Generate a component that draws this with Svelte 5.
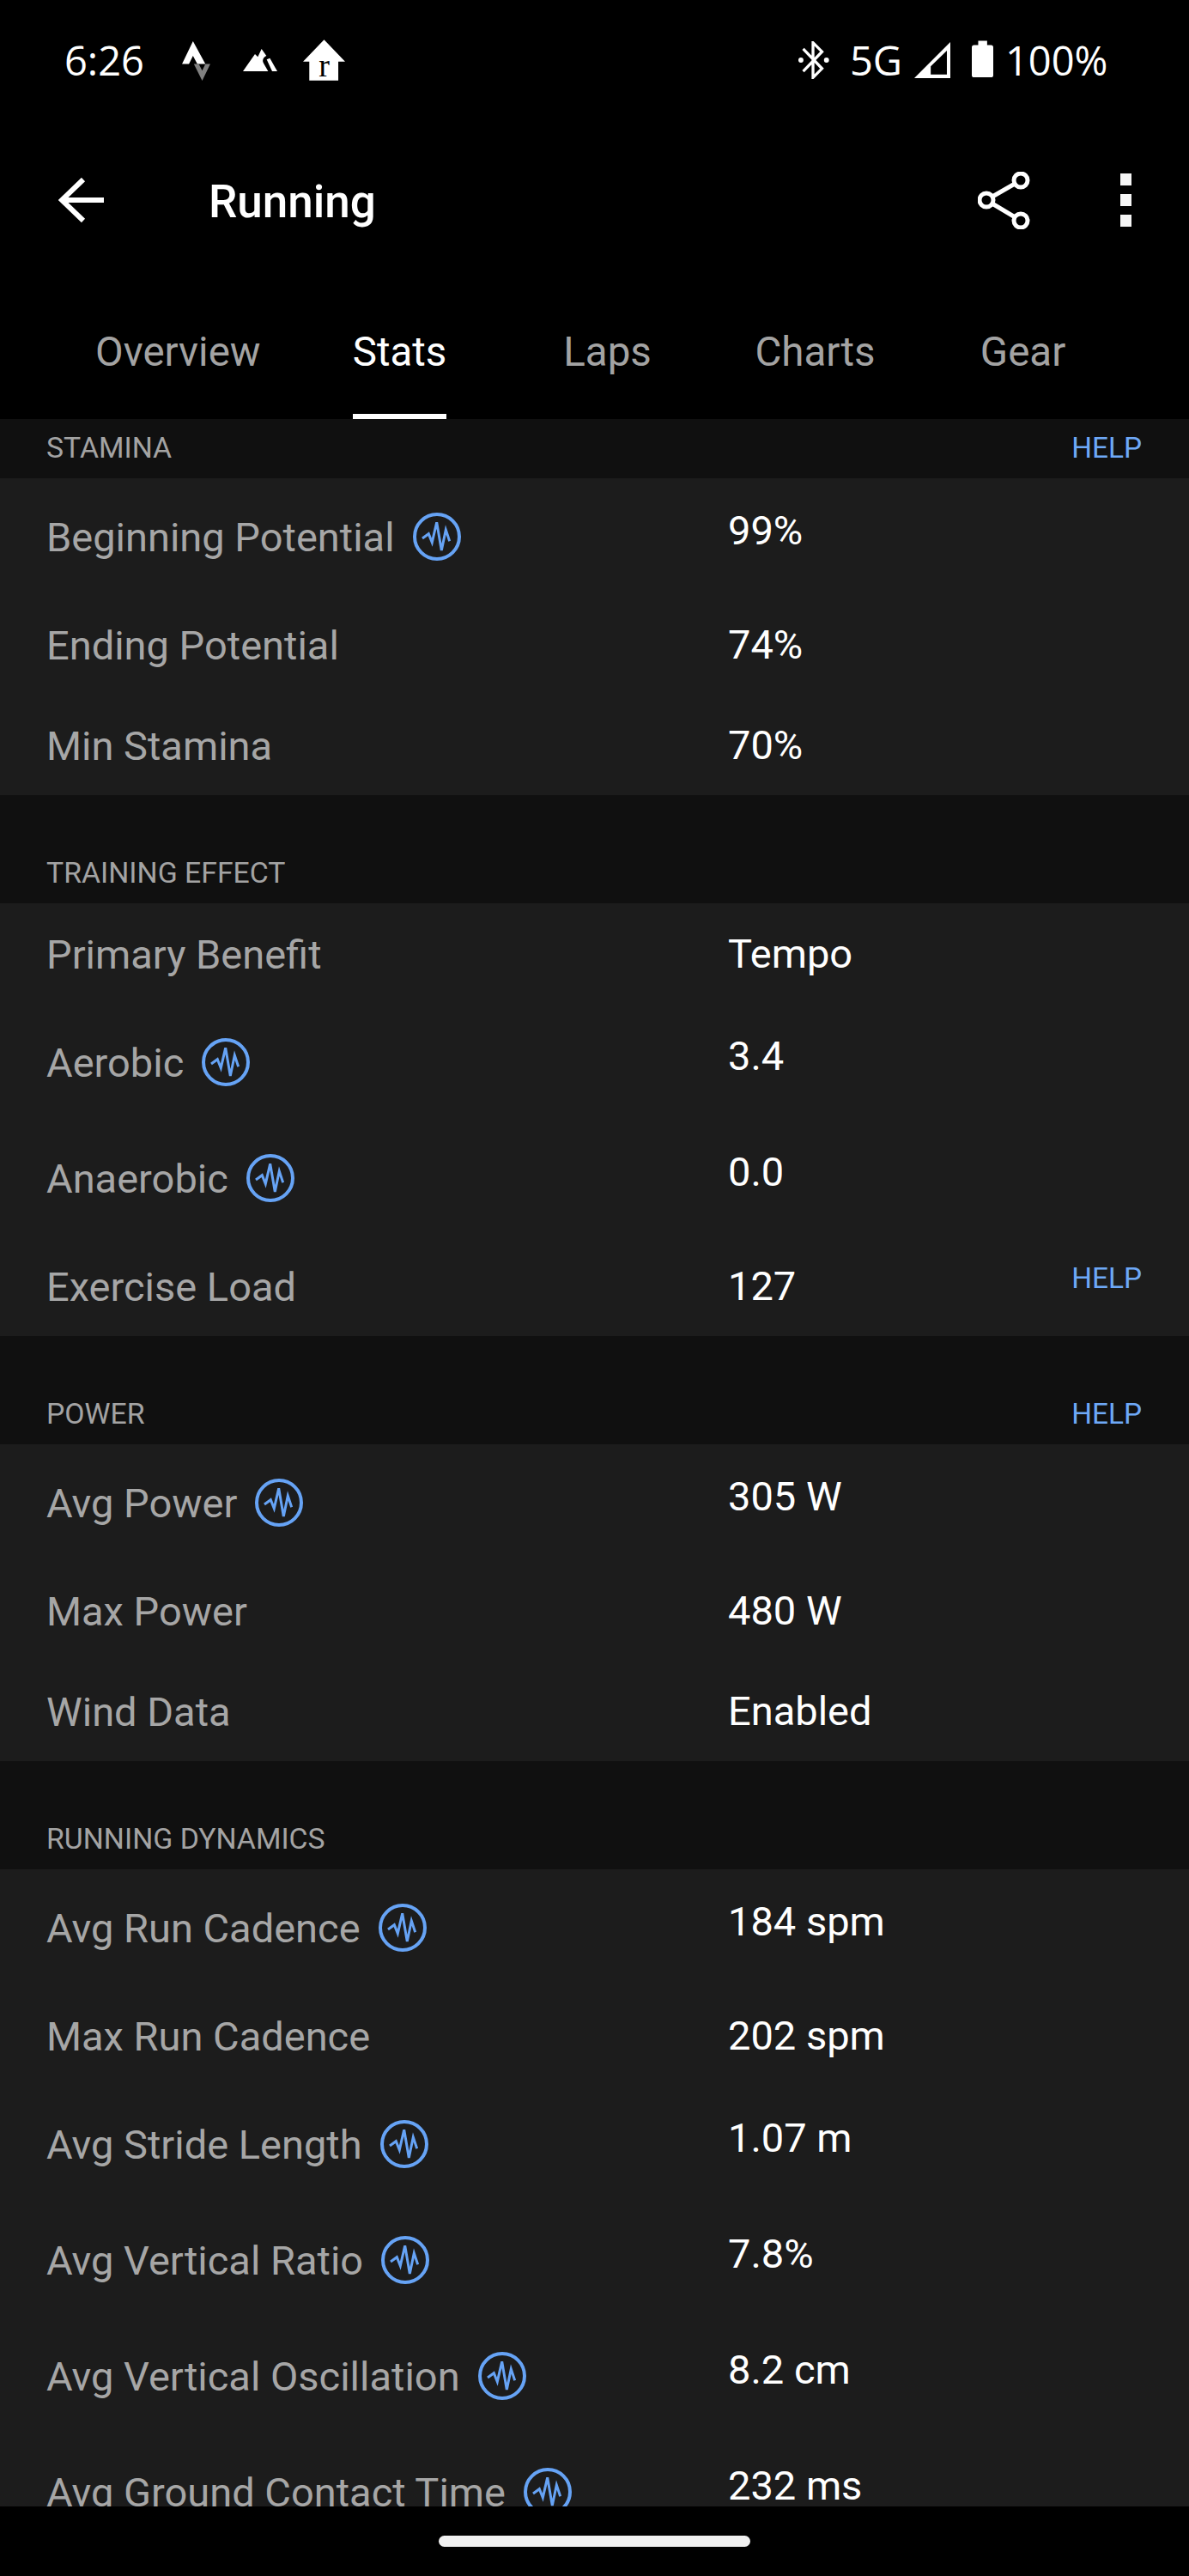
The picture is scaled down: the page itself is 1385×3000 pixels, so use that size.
<script>
    const tabs = ['Overview', 'Stats', 'Laps', 'Charts', 'Gear'];
    const sections = [
        {
            title: 'STAMINA', help: true, clipped: true,
            rows: [
                {label: 'Beginning Potential', value: '99%', chart: true},
                {label: 'Ending Potential', value: '74%'},
                {label: 'Min Stamina', value: '70%'}
            ]
        },
        {
            title: 'TRAINING EFFECT',
            rows: [
                {label: 'Primary Benefit', value: 'Tempo'},
                {label: 'Aerobic', value: '3.4', chart: true},
                {label: 'Anaerobic', value: '0.0', chart: true},
                {label: 'Exercise Load', value: '127', help: true}
            ]
        },
        {
            title: 'POWER', help: true,
            rows: [
                {label: 'Avg Power', value: '305 W', chart: true},
                {label: 'Max Power', value: '480 W'},
                {label: 'Wind Data', value: 'Enabled'}
            ]
        },
        {
            title: 'RUNNING DYNAMICS',
            rows: [
                {label: 'Avg Run Cadence', value: '184 spm', chart: true},
                {label: 'Max Run Cadence', value: '202 spm'},
                {label: 'Avg Stride Length', value: '1.07 m', chart: true},
                {label: 'Avg Vertical Ratio', value: '7.8%', chart: true},
                {label: 'Avg Vertical Oscillation', value: '8.2 cm', chart: true},
                {label: 'Avg Ground Contact Time', value: '232 ms', chart: true}
            ]
        }
    ];
</script>

<div class="screen">
    <div class="status">
        <div class="status-left">
            <span class="time">6:26</span>
            <svg class="strava" viewBox="517 83 98 137">
                <path fill="#fff" d="M555 83 517 162H541L555 134 570 162H598Z"/>
                <path fill="#808080" d="M558 162 587 220 615 162H598L587 185 575 162Z"/>
            </svg>
            <svg class="peaks" viewBox="730 108 120 82">
                <path fill="#fff" d="M730 188 772 128 782 138 795 110 812 134C800 140 796 150 803 162L818 188Z"/>
                <path fill="#fff" d="M813 147 824 142 850 188H832Z"/>
            </svg>
            <svg class="house" viewBox="938 78 148 144">
                <path fill="#fff" d="M1012 78 1086 155H1062V222H960V155H938Z"/>
                <text x="1012" y="208" text-anchor="middle">r</text>
            </svg>
        </div>
        <div class="status-right">
            <svg class="bluetooth" viewBox="88 85 110 130">
                <path fill="none" stroke="#fff" stroke-width="10" d="M105 110 172 180 140 212V88L172 120 105 190"/>
                <circle cx="97" cy="150" r="9" fill="#fff"/>
                <circle cx="188" cy="150" r="9" fill="#fff"/>
            </svg>
            <span class="net">5G</span>
            <svg class="signal" viewBox="495 88 125 125">
                <path fill="#fff" fill-rule="evenodd" d="M620 88V213H495ZM608 118 552 172V200H608Z"/>
            </svg>
            <svg class="battery" viewBox="695 82 77 132">
                <path fill="#fff" d="M718 82H750V97H764Q772 97 772 105V205Q772 213 764 213H703Q695 213 695 205V105Q695 97 703 97H718Z"/>
            </svg>
            <span class="percent">100%</span>
        </div>
    </div>

    <div class="toolbar">
        <svg class="back" viewBox="0 0 53 52">
            <path fill="none" stroke="#fff" stroke-width="6" d="M53 26H4M29 2 4 26 29 50"/>
        </svg>
        <span class="title">Running</span>
        <svg class="share" viewBox="0 0 61 67">
            <path stroke="#fff" stroke-width="5" d="M10 33 50 10M10 33 50 57"/>
            <circle cx="10" cy="33" r="8" fill="#000" stroke="#fff" stroke-width="5"/>
            <circle cx="50" cy="10" r="8" fill="#000" stroke="#fff" stroke-width="5"/>
            <circle cx="50" cy="57" r="8" fill="#000" stroke="#fff" stroke-width="5"/>
        </svg>
        <div class="dots"><i></i><i></i><i></i></div>
    </div>

    <div class="tabs">
        {#each tabs as tab}
            <div class="tab" class:active={tab === 'Stats'}><span>{tab}</span></div>
        {/each}
    </div>

    <div class="content">
        {#each sections as section}
            <div class="section-head" class:clipped={section.clipped}>
                <span>{section.title}</span>
                {#if section.help}<span class="help">HELP</span>{/if}
            </div>
            <div class="panel">
                {#each section.rows as row}
                    <div class="row" class:has-chart={row.chart}>
                        <div class="label">
                            <span class="label-text">{row.label}</span>
                            {#if row.chart}
                                <svg class="pulse" viewBox="0 0 56 56">
                                    <circle cx="28" cy="28" r="26" fill="none" stroke="#66a3f5" stroke-width="4"/>
                                    <path fill="none" stroke="#66a3f5" stroke-width="3" d="M11 30 18.3 24.7 22.3 34.7 27.7 11.3 33.3 44 38.3 20 42.7 33.3"/>
                                </svg>
                            {/if}
                        </div>
                        <div class="value">{row.value}</div>
                        {#if row.help}<span class="help row-help">HELP</span>{/if}
                    </div>
                {/each}
            </div>
        {/each}
    </div>

    <div class="nav">
        <div class="pill"></div>
    </div>
</div>

<style>
    :global(body) {
        margin: 0;
        background: #000;
    }
    .screen {
        width: 1385px;
        height: 3000px;
        background: #000;
        display: flex;
        flex-direction: column;
        overflow: hidden;
        font-family: Roboto, "Liberation Sans", sans-serif;
    }
    .status {
        height: 130px;
        flex: none;
        display: flex;
        justify-content: space-between;
        align-items: flex-start;
        padding: 46px 96px 0 75px;
        box-sizing: border-box;
        color: #fff;
        font-family: "Open Sans", Roboto, sans-serif;
        font-size: 47px;
        line-height: 48px;
    }
    .status-left, .status-right {
        display: flex;
        align-items: flex-start;
    }
    .time {
        width: 90px;
    }
    .strava {
        width: 33px;
        height: 46px;
        margin: 2px 0 0 47px;
    }
    .peaks {
        width: 40px;
        height: 28px;
        margin: 10px 0 0 38px;
    }
    .house {
        width: 49px;
        height: 48px;
        margin: 0 0 0 30px;
    }
    .house text {
        font-family: "Liberation Serif", serif;
        font-size: 115px;
        fill: #000;
    }
    .bluetooth {
        width: 36px;
        height: 44px;
        margin: 2px 0 0 0;
    }
    .net {
        margin-left: 24px;
        width: 60px;
    }
    .signal {
        width: 42px;
        height: 42px;
        margin: 3px 0 0 15px;
    }
    .battery {
        width: 25px;
        height: 44px;
        margin: 1px 0 0 25px;
    }
    .percent {
        margin-left: 14px;
        width: 118px;
    }
    .toolbar {
        height: 206px;
        flex: none;
        display: flex;
        align-items: center;
        padding: 0 67px 0 68px;
        box-sizing: border-box;
        color: #fff;
    }
    .back {
        width: 53px;
        height: 52px;
    }
    .title {
        margin-left: 122px;
        font-size: 53px;
        font-weight: 500;
        flex: 1;
        padding-top: 4px;
    }
    .share {
        width: 61px;
        height: 67px;
    }
    .dots {
        margin-left: 105px;
        display: flex;
        flex-direction: column;
        gap: 10px;
    }
    .dots i {
        width: 13px;
        height: 14px;
        background: #f5f5f5;
    }
    .tabs {
        height: 152px;
        flex: none;
        display: flex;
        padding-left: 70px;
    }
    .tab {
        min-width: 242px;
        padding: 0 41px;
        box-sizing: border-box;
        display: flex;
        justify-content: center;
        color: #a3a3a3;
        font-size: 47.5px;
        line-height: 52px;
    }
    .tab span {
        padding-top: 48px;
        height: 104px;
        box-sizing: content-box;
    }
    .tab.active {
        color: #fff;
    }
    .tab.active span {
        box-shadow: inset 0 -6px 0 #fff;
        height: 98px;
        padding-bottom: 6px;
    }
    .content {
        flex: 1;
        min-height: 0;
        overflow: hidden;
        background: #101010;
    }
    .section-head {
        height: 126px;
        box-sizing: border-box;
        padding: 0 55px 15px 54px;
        display: flex;
        justify-content: space-between;
        align-items: flex-end;
        color: #a3a3a3;
        font-size: 33.8px;
        line-height: 40px;
    }
    .section-head.clipped {
        height: 69px;
    }
    .help {
        color: #6ea8f7;
        font-size: 33.4px;
    }
    .panel {
        background: #1c1c1c;
    }
    .row {
        height: 117px;
        position: relative;
        display: flex;
        align-items: center;
        padding-left: 54px;
        font-size: 47px;
        line-height: 54px;
    }
    .row.has-chart {
        height: 135px;
    }
    .label {
        width: 794px;
        flex: none;
        display: flex;
        align-items: center;
        gap: 21px;
        color: #a6a6a6;
    }
    .label-text {
        padding-top: 3px;
    }
    .value {
        color: #fff;
    }
    .has-chart .value {
        margin-bottom: 13px;
    }
    .pulse {
        width: 56px;
        height: 56px;
        flex: none;
    }
    .row-help {
        position: absolute;
        right: 55px;
        top: 30px;
        line-height: 40px;
    }
    .nav {
        height: 81px;
        flex: none;
        background: #000;
        display: flex;
        justify-content: center;
        padding-top: 34px;
        box-sizing: border-box;
    }
    .pill {
        width: 363px;
        height: 13px;
        border-radius: 7px;
        background: #f0f0f0;
    }
</style>
